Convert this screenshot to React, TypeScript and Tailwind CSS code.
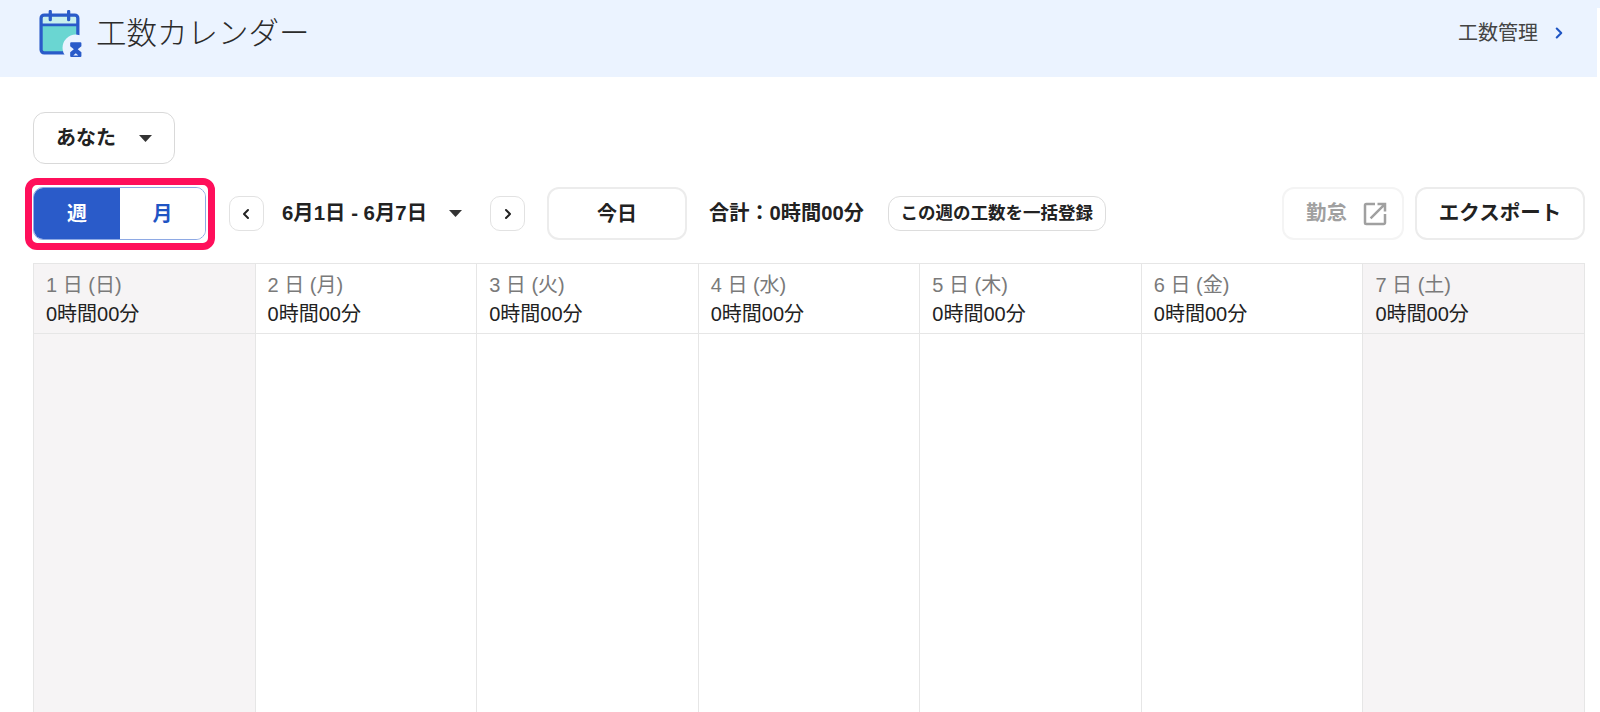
import { ChevronLeft, ChevronRight } from 'lucide-react';

const days = [
  { label: '1 日 (日)', off: true },
  { label: '2 日 (月)', off: false },
  { label: '3 日 (火)', off: false },
  { label: '4 日 (水)', off: false },
  { label: '5 日 (木)', off: false },
  { label: '6 日 (金)', off: false },
  { label: '7 日 (土)', off: true },
];

function Caret() {
  return (
    <svg width="13" height="7" viewBox="0 0 13 7" className="shrink-0">
      <path d="M0 0h13L6.5 7z" fill="#333333" />
    </svg>
  );
}

function OpenIcon() {
  return (
    <svg width="30" height="30" viewBox="0 0 24 24" className="shrink-0" fill="#a0a0a0">
      <path d="M19 19H5V5h7V3H5a2 2 0 0 0-2 2v14a2 2 0 0 0 2 2h14c1.100 0 2-.9 2-2v-7h-2v7zM14 3v2h3.590l-9.830 9.830 1.410 1.410L19 6.410V10h2V3h-7z" />
    </svg>
  );
}

function CalendarIcon() {
  return (
    <svg width="45" height="49" viewBox="0 0 44 48" className="shrink-0">
      <path d="M3 7.500a2 2 0 0 1 2-2h30a2 2 0 0 1 2 2v7H3z" fill="#c9f0ee" />
      <path d="M3 14.500h34V40a2 2 0 0 1-2 2H5a2 2 0 0 1-2-2z" fill="#6ad6d2" />
      <path d="M5 5h30a3 3 0 0 1 3 3v31a3 3 0 0 1-3 3H5a3 3 0 0 1-3-3V8a3 3 0 0 1 3-3z" fill="none" stroke="#2a5bc9" strokeWidth="3.200" />
      <path d="M2 14.500h36" stroke="#2a5bc9" strokeWidth="2.600" />
      <path d="M11 1.500v8M29 1.500v8" stroke="#2a5bc9" strokeWidth="3.200" strokeLinecap="round" />
      <circle cx="36" cy="37" r="13" fill="#ebf3ff" />
      <path d="M30.500 32.500a1 1 0 0 1 1-1h9a1 1 0 0 1 1 1v3l-3.600 3 3.600 3v3.500a1 1 0 0 1-1 1h-9a1 1 0 0 1-1-1V41.500l3.600-3-3.600-3z" fill="#2a5bc9" />
      <path d="M33.500 44.500l2.500-2.200 2.500 2.200z" fill="#ebf3ff" />
    </svg>
  );
}

export default function App() {
  const outline = 'border-2 border-[#ececec] rounded-[12px] bg-white';
  return (
    <div className="h-[712px] overflow-hidden bg-white text-[#222222] font-['Liberation_Sans','Noto_Sans_CJK_JP',sans-serif]">
      <header className="relative h-[77px] bg-[#ebf3ff] flex items-center pl-[39px] pr-[32px]">
        <div className="-mt-[8px]">
          <CalendarIcon />
        </div>
        <h1 className="ml-[12px] -mt-[10px] text-[30.5px] leading-none font-light text-[#2b2b2b] whitespace-nowrap">工数カレンダー</h1>
        <div className="ml-auto -mt-[11px] flex items-center gap-[12px]">
          <span className="text-[20px] text-[#444444]">工数管理</span>
          <ChevronRight size={18} strokeWidth={2.8} className="text-[#1f55c4]" />
        </div>
        <div className="absolute right-0 top-[8px] bottom-0 w-[3px] bg-white" />
      </header>

      <div className="pl-[33px] pr-[15px]">
        <button className="mt-[35px] h-[52px] w-[142px] border border-[#d9d9d9] rounded-[12px] flex items-center pl-[22px] gap-[23px] text-[20px] font-bold">
          あなた
          <Caret />
        </button>

        <div className="mt-[23px] h-[53px] flex items-center">
          <div className="relative">
            <div className="flex h-[53px] w-[173px] rounded-[10px] overflow-hidden border border-[#8ea9e4]">
              <div className="w-[86px] bg-[#2a5bc9] text-white font-bold text-[20px] flex items-center justify-center">週</div>
              <div className="flex-1 bg-white text-[#1f55c4] font-bold text-[20px] flex items-center justify-center">月</div>
            </div>
            <div className="absolute -left-[8px] -top-[9px] -right-[9px] -bottom-[10px] border-[7px] border-[#ff0f5b] rounded-[12px]" />
          </div>

          <button className="ml-[23px] w-[35px] h-[35px] border border-[#e2e2e2] rounded-[10px] flex items-center justify-center">
            <ChevronLeft size={16} strokeWidth={3} className="-ml-[2px]" />
          </button>
          <span className="ml-[18px] text-[20.4px] font-bold whitespace-nowrap">6月1日 - 6月7日</span>
          <span className="ml-[22px]">
            <Caret />
          </span>
          <button className="ml-[28px] w-[35px] h-[35px] border border-[#e2e2e2] rounded-[10px] flex items-center justify-center">
            <ChevronRight size={16} strokeWidth={3} />
          </button>

          <button className={`ml-[22px] w-[140px] h-[53px] text-[20px] font-bold ${outline}`}>今日</button>
          <span className="ml-[22px] text-[20.2px] font-bold whitespace-nowrap">合計：0時間00分</span>
          <button className="ml-[24px] w-[218px] h-[35px] border border-[#dddddd] rounded-[12px] text-[17.5px] font-bold whitespace-nowrap">この週の工数を一括登録</button>

          <button className={`ml-auto w-[122px] h-[53px] flex items-center justify-center pl-[10px] gap-[13px] text-[20.5px] font-bold text-[#a0a0a0] ${outline} border-[#f4f4f4]`}>
            勤怠
            <OpenIcon />
          </button>
          <button className={`ml-[11px] w-[170px] h-[53px] text-[20.5px] font-bold whitespace-nowrap ${outline}`}>エクスポート</button>
        </div>

        <div className="mt-[23px] grid grid-cols-7 h-[449px] border-t border-l border-[#e6e6e6]">
          {days.map((d) => (
            <div key={d.label} className={`flex flex-col border-r border-[#e6e6e6] ${d.off ? 'bg-[#f6f4f5]' : 'bg-white'}`}>
              <div className="h-[70px] pl-[12px] pt-[7px] border-b border-[#e6e6e6] text-[20px] leading-[29px]">
                <div className="text-[#7a7a7a]">{d.label}</div>
                <div className="text-[#222222]">0時間00分</div>
              </div>
            </div>
          ))}
        </div>
      </div>
    </div>
  );
}
